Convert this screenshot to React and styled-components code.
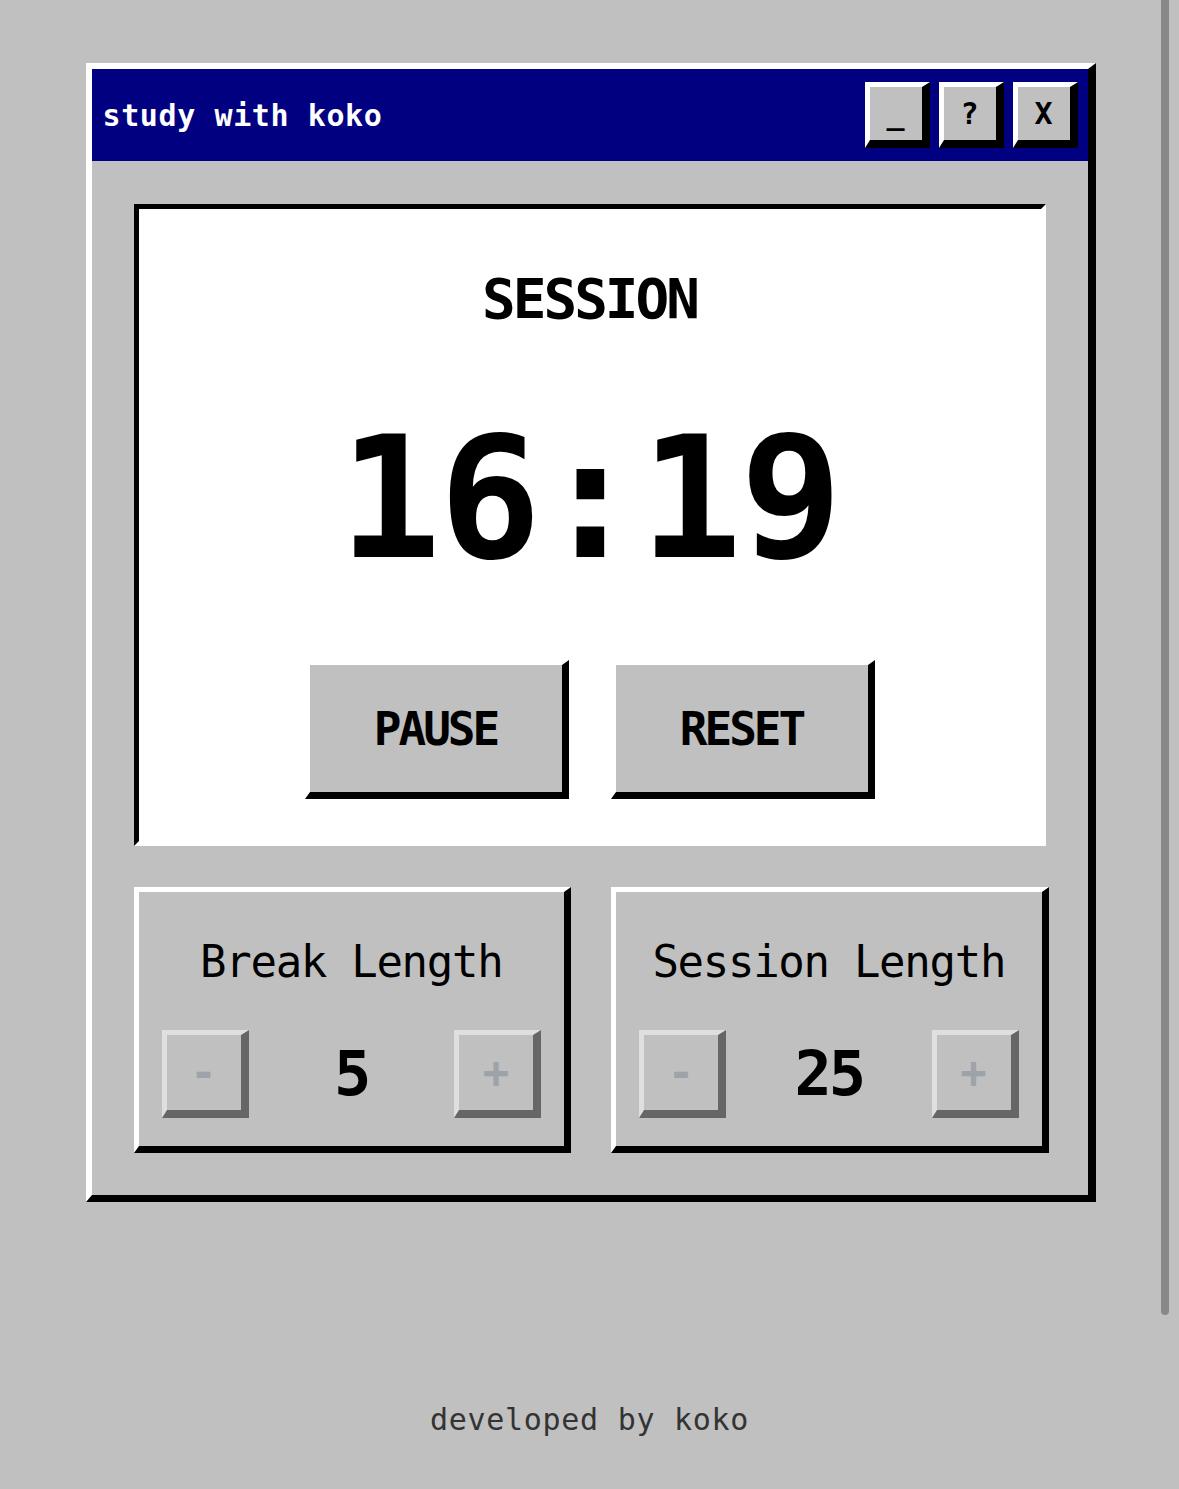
import React, { useState } from 'react';
import styled, { createGlobalStyle } from 'styled-components';

const GlobalStyle = createGlobalStyle`
  * { box-sizing: border-box; }
  html, body {
    margin: 0;
    padding: 0;
    background: #c0c0c0;
    font-family: "DejaVu Sans Mono", "Liberation Mono", monospace;
  }
`;

const Page = styled.div`
  min-height: 1489px;
  display: flex;
  flex-direction: column;
  align-items: center;
  padding-top: 63px;
`;

const Scrollbar = styled.div`
  position: fixed;
  top: 0;
  right: 10px;
  width: 8px;
  height: 1315px;
  background: #888;
  border-radius: 0 0 4px 4px;
`;

const Window = styled.div`
  width: 1010px;
  margin-left: 2px;
  background: #c0c0c0;
  border-style: solid;
  border-width: 6px 8px 7px 6px;
  border-color: #fff #000 #000 #fff;
`;

const TitleBar = styled.div`
  height: 92px;
  background: #000080;
  display: flex;
  align-items: center;
  justify-content: space-between;
  padding: 0 10px 0 11px;
`;

const Title = styled.div`
  color: #fff;
  font-size: 30px;
  font-weight: bold;
  letter-spacing: 0.6px;
`;

const TitleButtons = styled.div`
  display: flex;
  gap: 9px;
`;

const TitleButton = styled.button`
  width: 65px;
  height: 66px;
  padding: 0;
  background: #c0c0c0;
  border-style: solid;
  border-width: 5px 8px 8px 5px;
  border-color: #fff #000 #000 #fff;
  font-family: inherit;
  font-size: 30px;
  font-weight: bold;
  color: #000;
  display: flex;
  align-items: center;
  justify-content: center;
`;

const Body = styled.div`
  padding: 43px 42px 42px;
  display: flex;
  flex-direction: column;
  gap: 41px;
`;

const Display = styled.div`
  background: #fff;
  border-style: solid;
  border-width: 5px;
  border-color: #000 #fff #fff #000;
  padding: 62px 0 42px;
  display: flex;
  flex-direction: column;
  align-items: center;
`;

const Label = styled.div`
  font-size: 56px;
  line-height: 1;
  font-weight: bold;
  letter-spacing: -3px;
  color: #000;
`;

const Time = styled.div`
  margin-top: 86px;
  font-size: 170px;
  line-height: 1;
  font-weight: bold;
  letter-spacing: -2px;
  color: #000;
`;

const Controls = styled.div`
  margin-top: 77px;
  display: flex;
  gap: 42px;
`;

const ControlButton = styled.button`
  width: 264px;
  height: 139px;
  background: #c0c0c0;
  border-style: solid;
  border-width: 5px 7px 7px 5px;
  border-color: #fff #000 #000 #fff;
  font-family: inherit;
  font-size: 46px;
  font-weight: bold;
  letter-spacing: -3px;
  color: #000;
`;

const Settings = styled.div`
  display: grid;
  grid-template-columns: 1fr 1fr;
  gap: 40px;
  margin-right: -3px;
`;

const SettingBox = styled.div`
  border-style: solid;
  border-width: 5px 7px 7px 5px;
  border-color: #fff #000 #000 #fff;
  padding: 48px 23px 28px;
  display: flex;
  flex-direction: column;
  align-items: center;
  gap: 46px;
`;

const SettingLabel = styled.div`
  font-size: 44px;
  line-height: 1;
  letter-spacing: -1.3px;
  color: #000;
`;

const Stepper = styled.div`
  width: 100%;
  display: flex;
  align-items: center;
  justify-content: space-between;
`;

const StepButton = styled.button`
  width: 87px;
  height: 88px;
  padding: 0;
  background: #c0c0c0;
  border-style: solid;
  border-width: 5px 8px 8px 5px;
  border-color: #dfdfdf #666 #666 #dfdfdf;
  font-family: inherit;
  font-size: 44px;
  font-weight: bold;
  color: #9ea3a9;
`;

const Value = styled.div`
  font-size: 62px;
  line-height: 1;
  font-weight: bold;
  letter-spacing: -3px;
  color: #000;
`;

const Footer = styled.div`
  margin-top: 203px;
  font-size: 30px;
  line-height: 1;
  letter-spacing: 0.7px;
  color: #333;
`;

function Setting({ label, value }) {
  return (
    <SettingBox>
      <SettingLabel>{label}</SettingLabel>
      <Stepper>
        <StepButton>-</StepButton>
        <Value>{value}</Value>
        <StepButton>+</StepButton>
      </Stepper>
    </SettingBox>
  );
}

export default function App() {
  const [breakLength] = useState(5);
  const [sessionLength] = useState(25);
  return (
    <>
      <GlobalStyle />
      <Page>
        <Window>
          <TitleBar>
            <Title>study with koko</Title>
            <TitleButtons>
              <TitleButton>_</TitleButton>
              <TitleButton>?</TitleButton>
              <TitleButton>X</TitleButton>
            </TitleButtons>
          </TitleBar>
          <Body>
            <Display>
              <Label>SESSION</Label>
              <Time>16:19</Time>
              <Controls>
                <ControlButton>PAUSE</ControlButton>
                <ControlButton>RESET</ControlButton>
              </Controls>
            </Display>
            <Settings>
              <Setting label="Break Length" value={breakLength} />
              <Setting label="Session Length" value={sessionLength} />
            </Settings>
          </Body>
        </Window>
        <Footer>developed by koko</Footer>
      </Page>
      <Scrollbar />
    </>
  );
}
